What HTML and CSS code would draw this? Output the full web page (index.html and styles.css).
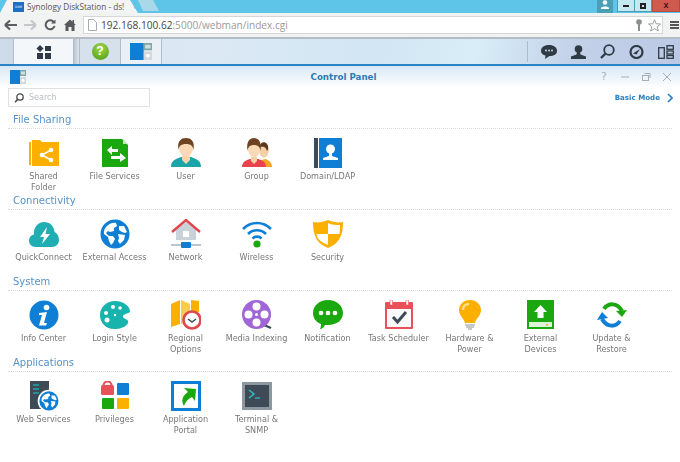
FILE: index.html
```html
<!DOCTYPE html>
<html lang="en">
<head>
<meta charset="utf-8">
<title>Synology DiskStation</title>
<link rel="stylesheet" href="styles.css">
</head>
<body>
<svg class="defs" width="0" height="0" aria-hidden="true">
  <defs>
    <g id="globe">
      <circle cx="15" cy="15" r="14.5" fill="#0f7fd6"/>
      <path d="M6 8 C9 4 14 3 16 4 L17 7 L14 9 L14 12 L10 13 L8 12 L6 14 L9 17 L13 17 L15 20 L13 24 L11 26 L9 22 L8 18 L4 15 C3.500 12 4.500 10 6 8Z" fill="#fff"/>
      <path d="M19 7 L24 7 L27 13 L25 14 L22 13 L19 11Z M18 15 L25 16 L24 21 L20 25 L18 22 L19 19Z" fill="#fff"/>
    </g>
    <g id="cp">
      <rect x="0" y="0" width="10" height="14" fill="#0f7fd6"/>
      <rect x="10" y="0" width="6" height="6" fill="#7fa7a8"/>
      <rect x="11" y="1.500" width="4" height="3" fill="#cfe0dc"/>
      <rect x="10" y="7" width="6" height="7" fill="#d5d8da"/>
      <circle cx="13" cy="10.500" r="1.500" fill="#fff"/>
    </g>
  </defs>
</svg>

<header class="tabs">
  <div class="tab">
    <span class="favicon">DSM</span>
    <span class="tab-title">Synology DiskStation - ds!</span>
    <span class="tab-close">✕</span>
  </div>
  <div class="new-tab"></div>
  <div class="spacer"></div>
  <div class="user-badge">
    <svg width="8" height="10" viewBox="0 0 8 10"><circle cx="4" cy="2.500" r="2.300" fill="#fff"/><path d="M0 9 L0 8 C1 6 7 6 8 8 L8 9Z" fill="#fff"/></svg>
  </div>
  <div class="win-btn win-min"><span class="min-mark"></span></div>
  <div class="win-btn win-max"><span class="max-mark"></span></div>
  <div class="win-btn win-close">x</div>
</header>

<nav class="toolbar">
  <svg class="nav-icon" width="14" height="12" viewBox="0 0 14 12"><path d="M1 6 L6 1.500 M1 6 L6 10.500 M1 6 L13 6" stroke="#5b5f63" stroke-width="2.200" fill="none"/></svg>
  <svg class="nav-icon" width="14" height="12" viewBox="0 0 14 12"><path d="M13 6 L8 1.500 M13 6 L8 10.500 M13 6 L1 6" stroke="#c3c7ca" stroke-width="2.200" fill="none"/></svg>
  <svg class="nav-icon nav-reload" width="12" height="12" viewBox="0 0 12 12"><path d="M10 3.500 A4.500 4.500 0 1 0 10.500 7" stroke="#55595d" stroke-width="2" fill="none"/><path d="M7 4.500 L11.500 4.500 L11.500 0.500Z" fill="#55595d"/></svg>
  <svg class="nav-icon nav-home" width="12" height="12" viewBox="0 0 12 12"><path d="M0 6 L6 .5 L8.500 2.800 L8.500 1 L10 1 L10 4.200 L12 6 L10.500 6 L10.500 12 L7.500 12 L7.500 8 L4.500 8 L4.500 12 L1.500 12 L1.500 6Z" fill="#55595d"/></svg>
  <div class="omnibox">
    <svg width="9" height="12" viewBox="0 0 9 12"><path d="M.5 .5 L5.500 .5 L8.500 3.500 L8.500 11.500 L.5 11.500Z" fill="#fff" stroke="#a9acae"/></svg>
    <span class="url"><b class="host">192.168.100.62</b>:5000/webman/index.cgi</span>
    <svg class="omni-end" width="8" height="12" viewBox="0 0 8 12"><circle cx="4" cy="3" r="2.800" fill="#8b8f8c"/><rect x="3" y="5" width="2" height="7" fill="#8b8f8c"/></svg>
    <svg width="13" height="13" viewBox="0 0 13 13"><path d="M6.500 .8 L8.200 4.800 L12.500 5 L9.200 7.800 L10.300 12 L6.500 9.700 L2.700 12 L3.800 7.800 L.5 5 L4.800 4.800Z" fill="#fff" stroke="#9a9da0"/></svg>
  </div>
  <div class="menu"><i></i><i></i><i></i></div>
</nav>

<div class="taskbar">
  <div class="strip"></div>
  <div class="task-btn task-main">
    <svg width="16" height="14" viewBox="0 0 16 14" fill="#2f3a44"><path d="M3.500 0 L7 3.500 L3.500 7 L0 3.500Z" transform="translate(0.500 0)"/><rect x="9" y="1" width="6" height="5"/><rect x="1" y="8" width="6" height="6"/><rect x="9" y="8" width="6" height="6"/></svg>
  </div>
  <div class="task-gap"></div>
  <div class="task-btn task-help">
    <span class="help-ball">?</span>
  </div>
  <div class="task-btn task-cp">
    <svg width="22" height="17" viewBox="0 0 16 14" preserveAspectRatio="none"><use href="#cp"/></svg>
  </div>
  <div class="spacer"></div>
  <div class="task-tools">
    <svg width="16" height="14" viewBox="0 0 16 14"><path d="M8 0 C13 0 16 2.500 16 6 C16 9.500 13 11 8.500 11 L4 14 L4.500 10.500 C2 10 0 8.500 0 6 C0 2.500 3 0 8 0Z" fill="#2f3a44"/><circle cx="5" cy="5.500" r="1" fill="#c5d3e8"/><circle cx="8" cy="5.500" r="1" fill="#c5d3e8"/><circle cx="11" cy="5.500" r="1" fill="#c5d3e8"/></svg>
    <svg width="15" height="14" viewBox="0 0 15 14"><circle cx="7.500" cy="4" r="3.800" fill="#2f3a44"/><path d="M6 7 L9 7 L9.500 9.500 L15 11.500 L15 14 L0 14 L0 11.500 L5.500 9.500Z" fill="#2f3a44"/></svg>
    <svg width="15" height="15" viewBox="0 0 15 15"><circle cx="9" cy="6" r="4.800" fill="none" stroke="#2f3a44" stroke-width="1.800"/><path d="M5.500 9.500 L1 14" stroke="#2f3a44" stroke-width="2.400"/></svg>
    <svg width="15" height="14" viewBox="0 0 15 14"><circle cx="7.500" cy="7" r="6" fill="none" stroke="#2f3a44" stroke-width="2.200"/><path d="M4 8.500 L11 4 L7.500 9.500Z" fill="#2f3a44"/></svg>
    <svg width="16" height="14" viewBox="0 0 16 14" fill="none" stroke="#2f3a44" stroke-width="1.300"><rect x=".7" y="2.700" width="5.600" height="10.600"/><rect x="9" y=".7" width="6.300" height="3.600"/><rect x="9" y="6" width="6.300" height="3"/><rect x="9" y="10.500" width="6.300" height="2.800"/></svg>
  </div>
</div>

<main class="window">
  <div class="window-head">
    <svg width="16" height="14" viewBox="0 0 16 14"><use href="#cp"/></svg>
    <h1 class="window-title">Control Panel</h1>
    <div class="window-controls">
      <span class="ctl-q">?</span>
      <svg width="10" height="10" viewBox="0 0 10 10"><path d="M1 5 L9 5" stroke="#a9adb1" stroke-width="1"/></svg>
      <svg width="10" height="10" viewBox="0 0 10 10" fill="none" stroke="#a9adb1"><rect x="1.500" y="3.500" width="6" height="5"/><path d="M3.500 1.500 L9 1.500 L9 6"/></svg>
      <svg width="10" height="10" viewBox="0 0 10 10"><path d="M1 1 L9 9 M9 1 L1 9" stroke="#a9adb1"/></svg>
    </div>
  </div>

  <div class="search-row">
    <div class="search">
      <svg width="10" height="10" viewBox="0 0 10 10"><circle cx="6" cy="4" r="3.200" fill="none" stroke="#4a4f54" stroke-width="1.300"/><path d="M3.700 6.400 L1 9.300" stroke="#4a4f54" stroke-width="1.600"/></svg>
      <span>Search</span>
    </div>
    <a class="basic-mode">Basic Mode<svg width="6" height="10" viewBox="0 0 6 10"><path d="M1 1 L5 5 L1 9" fill="none" stroke="#1d83c9" stroke-width="1.600"/></svg></a>
  </div>

  <section class="group">
    <h2 class="group-title">File Sharing</h2>
    <div class="items">
      <div class="item">
        <svg class="icon" viewBox="0 0 30 30"><path d="M0 4 L2 4 L2 27 L0 27Z" fill="#fbb000"/><path d="M3 2 L11 2 L13 4 L30 4 L30 28 L3 28Z" fill="#fbb000"/><circle cx="13" cy="17" r="2.300" fill="#fff"/><circle cx="22" cy="12" r="2.300" fill="#fff"/><circle cx="22" cy="22" r="2.300" fill="#fff"/><path d="M22 12 L13 17 L22 22" stroke="#fff" stroke-width="1.500" fill="none"/></svg>
        <span>Shared<br>Folder</span>
      </div>
      <div class="item">
        <svg class="icon" viewBox="0 0 30 30"><path d="M2 1 L22 1 L28 7 L28 29 L2 29Z" fill="#1aa80e"/><path d="M23 1 L28 6 L23 6Z" fill="#bfe8b6"/><path d="M7 12 L12 8 L12 11 L18 11 L18 14 L12 14 L12 17Z M26 20 L20 24 L20 21 L11 21 L11 18 L20 18 L20 15 Z" fill="#fff"/></svg>
        <span>File Services</span>
      </div>
      <div class="item">
        <svg class="icon" viewBox="0 0 30 30"><path d="M0 29 C0 22 5 21 10 19 L20 19 C25 21 30 22 30 29Z" fill="#1ba5a8"/><path d="M11 18 L19 18 L19 22 L15 26 L11 22Z" fill="#f7d4ad"/><ellipse cx="15" cy="10" rx="7" ry="9" fill="#f9d9b6"/><path d="M7.500 12 C6 3 10 0 15 0 C20 0 24 3 22.500 12 C22 8 20 6 15 6 C10 6 8 8 7.500 12Z" fill="#6d4321"/></svg>
        <span>User</span>
      </div>
      <div class="item">
        <svg class="icon" viewBox="0 0 30 30"><path d="M19 29 L30 29 C30 24 27 23 24 21 L19 22Z" fill="#f5a623"/><ellipse cx="22" cy="12" rx="5" ry="7.500" fill="#f5cfa5"/><path d="M18 7 C19 4 23 3 25 6 C27 9 26 12 25 13 C24 9 22 8 18 9Z" fill="#5a3a1e"/><path d="M0 29 C0 24 4 22 8 21 L16 21 C20 22 24 24 24 29Z" fill="#e8424c"/><path d="M9 19 L15 19 L15 23 L12 26 L9 23Z" fill="#f5cfa5"/><ellipse cx="12" cy="11" rx="6" ry="8.500" fill="#f9d9b6"/><path d="M5.500 13 C4 3 8 0 12 0 C16 0 20 3 18.500 13 C18 9 16 7 12 7 C8 7 6 9 5.500 13Z" fill="#6d4321"/></svg>
        <span>Group</span>
      </div>
      <div class="item">
        <svg class="icon" viewBox="0 0 30 30"><rect x="1" y="0" width="4" height="30" fill="#3e4b57"/><rect x="6" y="0" width="23" height="30" fill="#0f7fd6"/><circle cx="17.500" cy="11" r="4.500" fill="#fff"/><path d="M16 15 L19 15 L19 18 L25 20 L25 22 L10 22 L10 20 L16 18Z" fill="#fff"/></svg>
        <span>Domain/LDAP</span>
      </div>
    </div>
  </section>

  <section class="group">
    <h2 class="group-title">Connectivity</h2>
    <div class="items">
      <div class="item">
        <svg class="icon" viewBox="0 0 30 30"><path d="M7 28 C2 28 0 25 0 21.500 C0 18 2 16 5 15.500 C4 9 9 3 15 3 C21 3 25 7 25.500 13 C28 14 30 17 30 21 C30 25 27 28 23 28Z" fill="#21aeb2"/><path d="M18 8 L11 18 L15 18 L13 25 L21 15 L16.500 15Z" fill="#fff"/></svg>
        <span>QuickConnect</span>
      </div>
      <div class="item">
        <svg class="icon" viewBox="0 0 30 30"><use href="#globe"/></svg>
        <span>External Access</span>
      </div>
      <div class="item">
        <svg class="icon" viewBox="0 0 30 30"><path d="M5 10 L15 3 L25 10 L25 21 L5 21Z" fill="#c9d1d9"/><path d="M1 13 L15 1 L29 13" fill="none" stroke="#e0474c" stroke-width="2.400"/><rect x="12" y="12" width="6" height="6" fill="#fff"/><path d="M0 26 L30 26" stroke="#9fb3c4" stroke-width="1.500"/><rect x="10" y="23" width="10" height="6" rx="1" fill="#0f7fd6"/></svg>
        <span>Network</span>
      </div>
      <div class="item">
        <svg class="icon" viewBox="0 0 30 30" fill="none" stroke="#0f7fd6" stroke-width="2.600"><path d="M1 10 C9 2 21 2 29 10"/><path d="M6 15 C11 10 19 10 24 15"/><path d="M10.500 19.500 C13 17 17 17 19.500 19.500"/><circle cx="15" cy="25" r="3.600" fill="#1aa80e" stroke="none"/></svg>
        <span>Wireless</span>
      </div>
      <div class="item">
        <svg class="icon" viewBox="0 0 30 30"><path d="M15 1 C20 3 25 4 30 3 C30 16 27 24 15 29 C3 24 0 16 0 3 C5 4 10 3 15 1Z" fill="#fbb000"/><path d="M15 4 C19 6 23 6 27 6 C27 9 27 12 26.500 15 L15 15Z M15 15 L15 26 C8 23 4 20 3.500 15Z" fill="#fff"/></svg>
        <span>Security</span>
      </div>
    </div>
  </section>

  <section class="group">
    <h2 class="group-title">System</h2>
    <div class="items">
      <div class="item">
        <svg class="icon" viewBox="0 0 30 30"><circle cx="15" cy="15" r="14.500" fill="#0f7fd6"/><circle cx="17.500" cy="7.500" r="2.800" fill="#fff"/><path d="M10 13 L18 12 L15 23 L18 23 L17 25.500 L10 25.500 L13 15 L10 15Z" fill="#fff"/></svg>
        <span>Info Center</span>
      </div>
      <div class="item">
        <svg class="icon" viewBox="0 0 30 30"><path d="M15 1 C24 1 30 7 30 11 C30 14 24 13 23 16 C22 19 30 19 28 23 C26 27 20 29 14 29 C6 29 0 23 0 15 C0 7 7 1 15 1Z" fill="#17b3ad"/><circle cx="6" cy="13" r="2" fill="#fff"/><circle cx="13" cy="7" r="2" fill="#fff"/><circle cx="20" cy="8" r="1.800" fill="#fff"/><circle cx="7" cy="20" r="2.500" fill="#fff"/><circle cx="15" cy="15" r="1.200" fill="#fff"/></svg>
        <span>Login Style</span>
      </div>
      <div class="item">
        <svg class="icon" viewBox="0 0 30 30"><path d="M0 4 L9 0 L9 24 L0 27Z M20 0 L28 1 L28 12 L20 14Z" fill="#fbb000"/><path d="M10 0 L19 4 L19 20 L10 24Z" fill="#fdca4b"/><circle cx="21" cy="20" r="8.500" fill="#fff" stroke="#e0474c" stroke-width="2.600"/><path d="M17 19 L21 22 L25 19" fill="none" stroke="#3e4b57" stroke-width="1.500"/></svg>
        <span>Regional<br>Options</span>
      </div>
      <div class="item">
        <svg class="icon" viewBox="0 0 30 30"><path d="M22 25 L29 28" stroke="#3e4b57" stroke-width="2.400"/><circle cx="14.500" cy="14.500" r="14.500" fill="#a066d6"/><circle cx="14.500" cy="6.500" r="4" fill="#fff"/><circle cx="14.500" cy="22.500" r="4" fill="#fff"/><circle cx="6.500" cy="14.500" r="4" fill="#fff"/><circle cx="22.500" cy="14.500" r="4" fill="#fff"/><circle cx="14.500" cy="14.500" r="1.500" fill="#fff"/></svg>
        <span>Media Indexing</span>
      </div>
      <div class="item">
        <svg class="icon" viewBox="0 0 30 30"><path d="M15 0 C24 0 30 6 30 13 C30 20 24 25 15 25 L12 25 C11 27 9 29 7 29 C8 27 8 25 8 24 C3 22 0 18 0 13 C0 6 6 0 15 0Z" fill="#1aa80e"/><circle cx="8" cy="13" r="2.300" fill="#fff"/><circle cx="15" cy="13" r="2.300" fill="#fff"/><circle cx="22" cy="13" r="2.300" fill="#fff"/></svg>
        <span>Notification</span>
      </div>
      <div class="item">
        <svg class="icon" viewBox="0 0 30 30"><rect x="1" y="2" width="28" height="27" rx="1" fill="#e8505a"/><rect x="3" y="9" width="24" height="18" fill="#fbfbfb"/><rect x="6" y="0" width="2.500" height="5" fill="#fff" stroke="#e8505a" stroke-width=".6"/><rect x="22" y="0" width="2.500" height="5" fill="#fff" stroke="#e8505a" stroke-width=".6"/><path d="M9 17 L13.500 22 L22 12" fill="none" stroke="#3e4b57" stroke-width="3"/></svg>
        <span>Task Scheduler</span>
      </div>
      <div class="item">
        <svg class="icon" viewBox="0 0 30 30"><path d="M15 0 C22 0 26 5 26 10 C26 16 21 18 20 23 L10 23 C9 18 4 16 4 10 C4 5 8 0 15 0Z" fill="#fbb000"/><path d="M8 10 C8 6 11 4 14 4" fill="none" stroke="#ffe08a" stroke-width="2.400"/><path d="M10 25 L20 25 M11 27 L19 27 M13 29 L17 29" stroke="#8c949b" stroke-width="1.200"/></svg>
        <span>Hardware &amp;<br>Power</span>
      </div>
      <div class="item">
        <svg class="icon" viewBox="0 0 30 30"><rect x="1" y="0" width="27" height="29" fill="#1aa80e"/><path d="M14.500 5 L21 12 L17.500 12 L17.500 18 L11.500 18 L11.500 12 L8 12Z" fill="#fff"/><rect x="3" y="22" width="23" height="5" fill="#dff3d8"/><rect x="20" y="24" width="2" height="1.500" fill="#e2b92d"/></svg>
        <span>External<br>Devices</span>
      </div>
      <div class="item">
        <svg class="icon" viewBox="0 0 30 30" fill="none" stroke-width="4"><path d="M7 9 C11 3 20 2 25 11" stroke="#1aa80e"/><path d="M30 10 L25 17 L19 11Z" fill="#1aa80e"/><path d="M23 21 C19 27 10 28 5 19" stroke="#0f7fd6"/><path d="M0 20 L5 12 L11 18Z" fill="#0f7fd6"/></svg>
        <span>Update &amp;<br>Restore</span>
      </div>
    </div>
  </section>

  <section class="group">
    <h2 class="group-title">Applications</h2>
    <div class="items">
      <div class="item">
        <svg class="icon" viewBox="0 0 30 30"><rect x="1" y="0" width="19" height="28" fill="#3e4b57"/><path d="M4 4 L10 4 M4 8 L10 8 M4 12 L10 12" stroke="#1ba5a8" stroke-width="1.500"/><g transform="translate(10 10) scale(.66)"><circle cx="15" cy="15" r="17" fill="#fff"/><use href="#globe"/></g></svg>
        <span>Web Services</span>
      </div>
      <div class="item">
        <svg class="icon" viewBox="0 0 30 30"><path d="M3.500 4.500 A4 4 0 0 1 11.500 4.500" fill="none" stroke="#e8505a" stroke-width="2.200"/><rect x="1" y="4" width="13" height="10" rx="1.500" fill="#e8505a"/><rect x="17" y="2" width="12" height="12" rx="1" fill="#0f7fd6"/><rect x="2" y="17" width="12" height="11" rx="1" fill="#1aa80e"/><rect x="17" y="17" width="12" height="11" rx="1" fill="#fbb000"/></svg>
        <span>Privileges</span>
      </div>
      <div class="item">
        <svg class="icon" viewBox="0 0 30 30"><rect x="0" y="0" width="30" height="30" fill="#0f7fd6"/><rect x="3" y="3" width="24" height="24" fill="#fff"/><path d="M13 7 L25 8 L24 20 L21 16 C17 18 15 20 13 25 C10 20 11 15 17 11Z" fill="#1aa80e"/></svg>
        <span>Application<br>Portal</span>
      </div>
      <div class="item">
        <svg class="icon" viewBox="0 0 30 30"><rect x="0" y="1" width="30" height="28" fill="#8d979f"/><rect x="3" y="4" width="24" height="22" fill="#3e4b57"/><path d="M7 9 L12 13 L7 17" fill="none" stroke="#2fc0c4" stroke-width="1.500"/><path d="M13 17 L18 17" stroke="#2fc0c4" stroke-width="1.200"/></svg>
        <span>Terminal &amp;<br>SNMP</span>
      </div>
    </div>
  </section>
</main>
</body>
</html>
```

FILE: styles.css
```css
* { box-sizing: border-box; }
html, body { margin: 0; padding: 0; }
body {
  width: 680px;
  height: 462px;
  overflow: hidden;
  background: #fff;
  font-family: "DejaVu Sans", sans-serif;
  filter: blur(0.45px);
}
.defs { display: block; height: 0; }
.spacer { flex: 1; }

/* browser tab strip */
.tabs {
  display: flex;
  align-items: stretch;
  height: 13px;
  background: #5fc5e8;
}
.tab {
  width: 138px;
  background: #f3f4f4;
  clip-path: polygon(7px 0, 130px 0, 100% 100%, 0 100%);
  display: flex;
  align-items: center;
  gap: 3px;
  padding-left: 13px;
}
.favicon {
  width: 11px;
  height: 10px;
  background: #1d6fc4;
  color: #fff;
  font-size: 3px;
  line-height: 10px;
  text-align: center;
  flex: none;
}
.tab-title {
  font: 8.200px/13px "Open Sans", sans-serif;
  color: #555;
  white-space: nowrap;
}
.tab-close { font-size: 7px; color: #444; margin-left: 6px; }
.new-tab {
  width: 21px;
  height: 11px;
  background: #a9d9e8;
  clip-path: polygon(0 0, 15px 0, 100% 100%, 5px 100%);
}
.user-badge {
  width: 16px;
  background: #4a9fb5;
  display: flex;
  justify-content: center;
  align-items: flex-start;
  margin-right: 4px;
}
.win-btn {
  display: flex;
  align-items: center;
  justify-content: center;
  height: 12px;
  border: 1px solid #4a9fb5;
  border-top: 0;
  background: #c5e8f2;
}
.win-min { width: 18px; }
.win-max { width: 17px; border-left: 0; }
.win-close {
  width: 28px;
  background: #cf5a4e;
  color: #3a1c18;
  border-color: #b54a40;
  font: bold 9px/11px "Liberation Sans", sans-serif;
}
.min-mark { width: 6px; height: 2px; background: #222; }
.max-mark { width: 6px; height: 6px; border: 2px solid #222; }

/* browser toolbar */
.toolbar {
  height: 24px;
  background: #f1f2f2;
  display: flex;
  align-items: center;
  gap: 5px;
  padding-left: 4px;
}
.nav-icon { flex: none; }
.nav-reload { margin-left: 2px; }
.nav-home { margin-left: 3px; }
.omnibox {
  width: 580px;
  height: 18px;
  margin-left: 2px;
  background: #fff;
  border: 1px solid #d5d6d7;
  display: flex;
  align-items: center;
  gap: 5px;
  padding: 0 1px 0 4px;
}
.url {
  flex: 1;
  margin-left: -1px;
  font: 10.100px/16px "Open Sans", sans-serif;
  color: #9a9a9a;
}
.host { font-weight: 400; color: #444; }
.menu { display: flex; flex-direction: column; gap: 1.500px; margin-left: 2px; }
.menu i { display: block; width: 9px; height: 1.500px; background: #555; }

/* DSM taskbar */
.taskbar {
  height: 29px;
  display: flex;
  align-items: stretch;
  border-top: 2px solid #b4bcc4;
  border-bottom: 2px solid #2b82c4;
  background: linear-gradient(100deg, #d4e1f0 0%, #dce9f5 30%, #d2e6f3 55%, #d8edf7 70%, #c2d0e8 85%, #bcc9e6 100%);
}
.strip { width: 14px; border-right: 1px solid #aebccb; background: #cfdbe9; }
.task-btn {
  display: flex;
  align-items: center;
  justify-content: center;
  border-right: 1px solid #aebccb;
}
.task-main { width: 60px; background: #f4f7fa; }
.task-gap { width: 6px; background: linear-gradient(90deg, #b9c3cd, #dde6ef); border-right: 1px solid #aebccb; }
.task-help { width: 41px; background: #d6e1ec; }
.task-cp { width: 41px; background: #eaf0f6; }
.help-ball {
  width: 17px;
  height: 17px;
  border-radius: 50%;
  background: radial-gradient(circle at 50% 30%, #a4d64e, #4a9a14);
  color: #fff;
  font: bold 12px/17px "Liberation Sans", sans-serif;
  text-align: center;
}
.task-tools {
  display: flex;
  align-items: center;
  gap: 14px;
  padding: 0 6px 0 13px;
  border-left: 1px solid #aebccb;
  margin: 2px 0;
}

/* control panel window */
.window-head {
  height: 22px;
  display: flex;
  align-items: center;
  padding: 0 8px 0 10px;
  background: linear-gradient(#d8e8f7, #ffffff);
}
.window-title {
  flex: 1;
  margin: 0;
  text-align: center;
  font: bold 8.700px/12px "DejaVu Sans", sans-serif;
  color: #2f7ab5;
  padding-left: 62px;
}
.window-controls { display: flex; align-items: center; gap: 11px; }
.ctl-q { font: 10px/10px "DejaVu Sans", sans-serif; color: #a9adb1; width: 10px; text-align: center; }

.search-row {
  height: 26px;
  display: flex;
  align-items: flex-start;
  justify-content: space-between;
  padding: 0 7px 0 8px;
}
.search {
  width: 142px;
  height: 19px;
  border: 1px solid #dfe1e3;
  display: flex;
  align-items: center;
  gap: 5px;
  padding-left: 5px;
  font-size: 8px;
  color: #b8bcc0;
}
.basic-mode {
  display: flex;
  align-items: center;
  gap: 7px;
  margin-top: 4px;
  font: bold 7.100px/12px "DejaVu Sans", sans-serif;
  color: #2a82c0;
}

.group { padding: 0 8px; height: 81px; }
.group-title {
  margin: 0;
  height: 14px;
  padding-left: 5px;
  font: 400 10px/11px "DejaVu Sans", sans-serif;
  color: #5492c8;
}
.items {
  display: flex;
  border-top: 1px dotted #d4dbe0;
  padding-top: 9px;
}
.item {
  width: 71px;
  display: flex;
  flex-direction: column;
  align-items: center;
  text-align: center;
  font-size: 8.100px;
  line-height: 11px;
  color: #777;
  white-space: nowrap;
  gap: 3px;
}
.icon { width: 30px; height: 30px; flex: none; }
```
